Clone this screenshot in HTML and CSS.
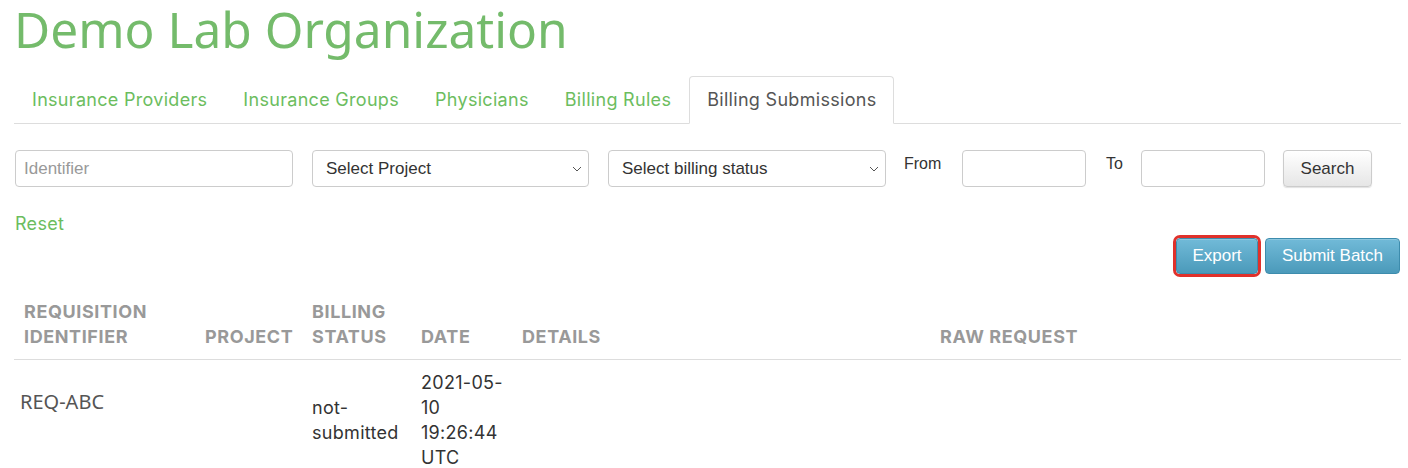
FILE: index.html
```html
<!DOCTYPE html>
<html>
<head>
<meta charset="utf-8">
<link rel="stylesheet" href="styles.css">
</head>
<body>
<div class="page">
  <h1 class="title">Demo Lab Organization</h1>
  <ul class="tabs">
    <li class="tab"><a>Insurance Providers</a></li>
    <li class="tab"><a>Insurance Groups</a></li>
    <li class="tab"><a>Physicians</a></li>
    <li class="tab"><a>Billing Rules</a></li>
    <li class="tab active"><a>Billing Submissions</a></li>
  </ul>

  <form class="filters">
    <input class="field field-id" type="text" placeholder="Identifier">
    <div class="select select-project"><span>Select Project</span><svg class="chev" viewBox="0 0 10 6" width="10" height="6"><path d="M1 1l4 4 4-4" fill="none" stroke="#555" stroke-width="1"/></svg></div>
    <div class="select select-status"><span>Select billing status</span><svg class="chev" viewBox="0 0 10 6" width="10" height="6"><path d="M1 1l4 4 4-4" fill="none" stroke="#555" stroke-width="1"/></svg></div>
    <label class="lbl lbl-from">From</label>
    <input class="field field-date" type="text">
    <label class="lbl lbl-to">To</label>
    <input class="field field-date" type="text">
    <button type="button" class="btn-default">Search</button>
  </form>

  <div class="reset-row"><a class="reset">Reset</a></div>

  <div class="actions">
    <span class="highlight"><button type="button" class="btn-info">Export</button></span>
    <button type="button" class="btn-info">Submit Batch</button>
  </div>

  <table class="grid">
    <colgroup>
      <col class="c1"><col class="c2"><col class="c3"><col class="c4"><col class="c5"><col class="c6">
    </colgroup>
    <thead>
      <tr>
        <th>REQUISITION<br>IDENTIFIER</th>
        <th>PROJECT</th>
        <th>BILLING<br>STATUS</th>
        <th>DATE</th>
        <th>DETAILS</th>
        <th>RAW REQUEST</th>
      </tr>
    </thead>
    <tbody>
      <tr>
        <td class="req"><span class="req-id">REQ-ABC</span></td>
        <td></td>
        <td>not-<br>submitted</td>
        <td>2021-05-<br>10<br>19:26:44<br>UTC</td>
        <td></td>
        <td></td>
      </tr>
    </tbody>
  </table>
</div>
</body>
</html>
```

FILE: styles.css
```css
html, body {
  margin: 0;
  padding: 0;
  background: #fff;
}
body {
  font-family: "Inter", "Roboto", "Liberation Sans", sans-serif;
  color: #333;
  font-size: 18px;
}
.page {
  margin-left: 14px;
  width: 1387px;
}
.title {
  font-family: "Noto Sans", sans-serif;
  font-weight: 400;
  font-size: 49.6px;
  line-height: 64px;
  color: #74bb6b;
  margin: -3px 0 0 0;
  height: 79px;
}
.tabs {
  list-style: none;
  margin: 0;
  padding: 0;
  display: flex;
  border-bottom: 1px solid #dddddd;
  height: 47px;
}
.tab {
  margin-bottom: -1px;
}
.tab a {
  display: block;
  padding: 10px 17px 11px 17px;
  line-height: 25px;
  font-size: 18px;
  letter-spacing: 0.3px;
  color: #6cbd5e;
  border: 1px solid transparent;
  border-radius: 4px 4px 0 0;
}
.tab.active a {
  color: #555;
  background: #fff;
  border-color: #dddddd;
  border-bottom-color: #fff;
}
.filters {
  display: flex;
  align-items: flex-start;
  margin: 26px 0 0 1px;
  height: 36px;
}
.field, .select, .btn-default {
  box-sizing: border-box;
  height: 37px;
  border: 1px solid #cccccc;
  border-radius: 4px;
  font-family: "Liberation Sans", sans-serif;
  font-size: 17px;
  background: #fff;
}
.field {
  padding: 0 8px;
  color: #555;
}
.field::placeholder {
  color: #999;
}
.field-id { width: 278px; margin-right: 19px; }
.select {
  display: flex;
  align-items: center;
  justify-content: space-between;
  padding: 0 6px 0 13px;
  color: #333;
}
.select-project { width: 277px; margin-right: 19px; }
.select-status { width: 278px; margin-right: 18px; }
.chev { margin-top: 1px; }
.lbl {
  font-family: "Liberation Sans", sans-serif;
  font-size: 16px;
  color: #333;
  padding-top: 5px;
}
.lbl-from { width: 58px; }
.lbl-to { width: 35px; }
.field-date { width: 124px; margin-right: 20px; }
.btn-default {
  width: 89px;
  color: #333;
  background: linear-gradient(#ffffff, #e6e6e6);
  box-shadow: 0 1px 1px rgba(0,0,0,0.12);
  padding: 0;
  margin-left: -2px;
}
.reset-row {
  margin-top: 26px;
  height: 24px;
  line-height: 24px;
  padding-left: 1px;
}
.reset {
  color: #6cbd5e;
  font-size: 18px;
  letter-spacing: 0.3px;
}
.actions {
  display: flex;
  justify-content: flex-end;
  align-items: center;
  gap: 4px;
  margin-top: -1px;
  padding-right: 1px;
}
.highlight {
  display: inline-block;
  border: 3px solid #e0312b;
  border-radius: 7px;
  padding: 0;
  margin-right: 0;
}
.btn-info {
  box-sizing: border-box;
  height: 36px;
  border: 1px solid #3d8cad;
  border-radius: 4px;
  background: linear-gradient(#71bad8, #4b9aba);
  color: #fff;
  font-family: "Liberation Sans", sans-serif;
  font-size: 17px;
  padding: 0 15px;
  box-shadow: inset 0 1px 0 rgba(255,255,255,0.2);
}
.highlight .btn-info {
  display: block;
  width: 82px;
  padding: 0;
}
.actions > .btn-info { width: 135px; }
.grid {
  border-collapse: collapse;
  width: 1387px;
  margin-top: 14px;
  table-layout: fixed;
}
.c1 { width: 181px; }
.c2 { width: 107px; }
.c3 { width: 109px; }
.c4 { width: 101px; }
.c5 { width: 418px; }
.c6 { width: auto; }
.grid th {
  text-align: left;
  vertical-align: bottom;
  font-weight: 700;
  font-size: 18px;
  line-height: 25px;
  letter-spacing: 0.6px;
  color: #999;
  padding: 8px 10px 10px 10px;
  border-bottom: 1px solid #dddddd;
  white-space: nowrap;
}
.grid td {
  vertical-align: middle;
  font-size: 18px;
  line-height: 25px;
  letter-spacing: 0.3px;
  color: #333;
  padding: 10px 10px 0 10px;
}
.grid td:nth-child(3), .grid td:nth-child(4) { padding-left: 10px; padding-right: 0; }
.req {
  padding-left: 6px !important;
}
.req-id {
  display: block;
  font-family: "Noto Sans", sans-serif;
  font-size: 20px;
  letter-spacing: 0;
  color: #555;
  margin-bottom: 38px;
}
```
